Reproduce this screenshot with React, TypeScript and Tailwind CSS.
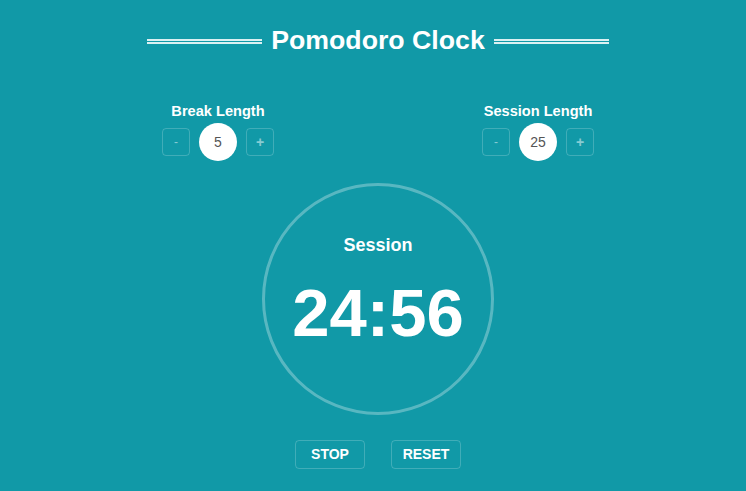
import React from 'react';

interface LengthControlProps {
  label: string;
  value: number;
}

const LengthControl: React.FC<LengthControlProps> = ({ label, value }) => {
  return (
    <div className="flex w-[112px] flex-col items-center">
      <div className="h-[18px] whitespace-nowrap text-[14.6px] font-bold leading-[18px] text-white">{label}</div>
      <div className="mt-[3px] flex items-center gap-[9px]">
        <button className="flex h-[28px] w-[28px] items-center justify-center rounded-[4px] border border-white/20 text-[12px] leading-none text-white/50">
          -
        </button>
        <div className="flex h-[38px] w-[38px] items-center justify-center rounded-full bg-white text-[14px] text-[#555]">
          {value}
        </div>
        <button className="flex h-[28px] w-[28px] items-center justify-center rounded-[4px] border border-white/20 text-[14px] font-bold leading-none text-white/50">
          +
        </button>
      </div>
    </div>
  );
};

export default function App() {
  return (
    <div
      className="flex h-[491px] w-[746px] flex-col items-center bg-[#1199a7] pl-[10px]"
      style={{ fontFamily: '"Liberation Sans", Arial, sans-serif' }}
    >
      {/* タイトル */}
      <div className="mt-[25px] flex items-center gap-[9px]">
        <div className="mt-[2px] h-[5px] w-[115px] border-y-2 border-white/85" />
        <h1 className="text-[26.7px] font-bold leading-[30px] text-white">Pomodoro Clock</h1>
        <div className="mt-[2px] h-[5px] w-[115px] border-y-2 border-white/85" />
      </div>

      <div className="mt-[47px] flex w-[432px] justify-between">
        <LengthControl label="Break Length" value={5} />
        <LengthControl label="Session Length" value={25} />
      </div>

      {/* タイマー */}
      <div className="mt-[22px] flex h-[232px] w-[232px] flex-col items-center rounded-full border-[3px] border-white/30">
        <div className="mt-[48px] text-[18px] font-bold leading-[22px] text-white">Session</div>
        <div className="mt-[19px] text-[67px] font-bold leading-[76px] text-white">24:56</div>
      </div>

      <div className="mt-[25px] flex gap-[26px]">
        <button className="h-[29px] w-[70px] rounded-[4px] border border-white/20 text-[14px] font-bold text-white">
          STOP
        </button>
        <button className="h-[29px] w-[70px] rounded-[4px] border border-white/20 text-[14px] font-bold text-white">
          RESET
        </button>
      </div>
    </div>
  );
}
